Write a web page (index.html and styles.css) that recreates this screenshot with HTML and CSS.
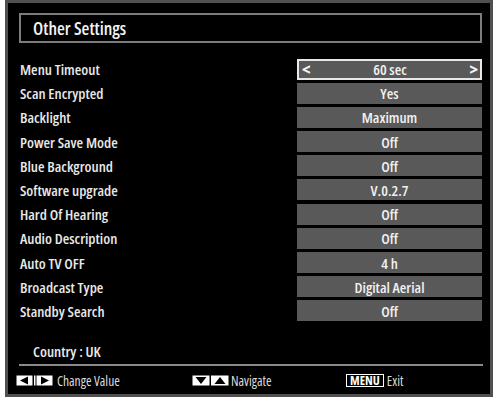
FILE: index.html
```html
<!DOCTYPE html>
<html>
<head>
<meta charset="utf-8">
<link rel="stylesheet" href="styles.css">
</head>
<body>
<div class="frame">
  <div class="title">Other Settings</div>
  <div class="rows">
    <div class="row"><span class="label">Menu Timeout</span><span class="value selected"><span class="arr">&lt;</span><span class="vt">60 sec</span><span class="arr">&gt;</span></span></div>
    <div class="row"><span class="label">Scan Encrypted</span><span class="value"><span class="vt">Yes</span></span></div>
    <div class="row"><span class="label">Backlight</span><span class="value"><span class="vt">Maximum</span></span></div>
    <div class="row"><span class="label">Power Save Mode</span><span class="value"><span class="vt">Off</span></span></div>
    <div class="row"><span class="label">Blue Background</span><span class="value"><span class="vt">Off</span></span></div>
    <div class="row"><span class="label">Software upgrade</span><span class="value"><span class="vt">V.0.2.7</span></span></div>
    <div class="row"><span class="label">Hard Of Hearing</span><span class="value"><span class="vt">Off</span></span></div>
    <div class="row"><span class="label">Audio Description</span><span class="value"><span class="vt">Off</span></span></div>
    <div class="row"><span class="label">Auto TV OFF</span><span class="value"><span class="vt">4 h</span></span></div>
    <div class="row"><span class="label">Broadcast Type</span><span class="value"><span class="vt">Digital Aerial</span></span></div>
    <div class="row"><span class="label">Standby Search</span><span class="value"><span class="vt">Off</span></span></div>
  </div>
  <div class="country">Country : UK</div>
  <div class="sep"></div>
  <div class="footer">
    <div class="item lr">
      <span class="key">
        <svg width="37" height="11" viewBox="0 0 37 11">
          <rect x="0.5" y="0.5" width="16" height="10" fill="#fff"/>
          <polygon points="4,5.5 12,1.5 12,9.5" fill="#000"/>
          <rect x="18" y="0.5" width="1.5" height="10" fill="#fff"/>
          <rect x="20.5" y="0.5" width="16" height="10" fill="#fff"/>
          <polygon points="33,5.5 25,1.5 25,9.5" fill="#000"/>
        </svg>
      </span>
      <span class="ft">Change Value</span>
    </div>
    <div class="item nav">
      <span class="key">
        <svg width="37" height="11" viewBox="0 0 37 11">
          <rect x="0.5" y="0.5" width="17" height="10" fill="#fff"/>
          <polygon points="3.5,2 14.5,2 9,9" fill="#000"/>
          <rect x="19" y="0.5" width="17.5" height="10" fill="#fff"/>
          <polygon points="22.5,9 33.5,9 28,2" fill="#000"/>
        </svg>
      </span>
      <span class="ft">Navigate</span>
    </div>
    <div class="item menu">
      <span class="menukey">MENU</span>
      <span class="ft">Exit</span>
    </div>
  </div>
</div>
</body>
</html>
```

FILE: styles.css
```css
html, body {
  margin: 0;
  padding: 0;
  background: #fff;
}
body {
  font-family: "Open Sans", "Liberation Sans", sans-serif;
  font-stretch: 75%;
  font-weight: 600;
}
.frame {
  margin-left: 5px;
  width: 488px;
  height: 397px;
  box-sizing: border-box;
  border: 3px solid #505050;
  background: #000;
  display: flex;
  flex-direction: column;
}
.frame > * {
  flex-shrink: 0;
}
.title {
  margin: 10px 8px 0 11px;
  height: 30px;
  box-sizing: border-box;
  border: 2px solid #7c7c7c;
  color: #f2f2f2;
  font-size: 18px;
  line-height: 26px;
  padding-left: 12px;
}
.rows {
  margin-top: 15.5px;
  display: flex;
  flex-direction: column;
  gap: 3.2px;
}
.row {
  height: 21px;
  display: flex;
  align-items: center;
  padding-left: 12px;
  padding-right: 8px;
}
.label {
  flex: 1;
  color: #e8e8e8;
  font-size: 15px;
  font-stretch: 80%;
  line-height: 18px;
}
.value {
  width: 185px;
  height: 21px;
  box-sizing: border-box;
  background: #595959;
  display: flex;
  align-items: center;
  justify-content: center;
  color: #f0f0f0;
  font-size: 15px;
}
.value.selected {
  border: 2px solid #e8e8e8;
  justify-content: space-between;
  padding: 0 2px 0 3px;
}
.arr {
  font-size: 18px;
  line-height: 17px;
  font-weight: 700;
  color: #f4f4f4;
}
.country {
  margin-top: 20.5px;
  padding-left: 25px;
  color: #eaeaea;
  font-size: 15px;
  line-height: 18px;
}
.sep {
  margin: 4px 0 0 11px;
  width: 464px;
  height: 0;
  border-top: 2px solid #8a8a8a;
}
.footer {
  margin-top: 8px;
  padding-left: 8px;
  display: flex;
  align-items: center;
  color: #dcdcdc;
  font-size: 13.5px;
  font-weight: 500;
}
.item {
  display: flex;
  align-items: center;
  gap: 4px;
}
.key {
  display: flex;
}
.lr {
  width: 176px;
}
.nav {
  width: 154px;
  gap: 2px;
}
.menukey {
  border: 1.5px solid #fff;
  color: #fff;
  font-weight: 700;
  font-size: 12.5px;
  line-height: 11px;
  padding: 0 3px;
}
.menu {
  gap: 3px;
}
.ft {
  line-height: 14px;
}
```
